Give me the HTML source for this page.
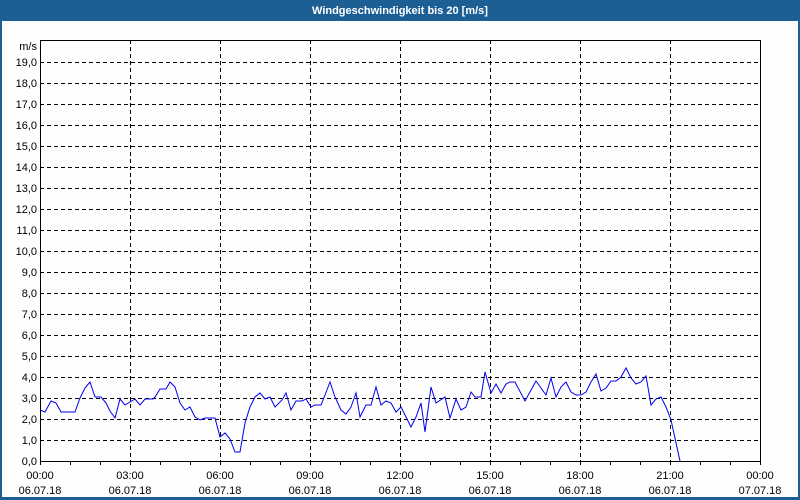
<!DOCTYPE html>
<html><head><meta charset="utf-8"><style>
html,body{margin:0;padding:0;width:800px;height:500px;overflow:hidden;background:#fff}
</style></head><body>
<svg width="800" height="500" xmlns="http://www.w3.org/2000/svg" font-family="Liberation Sans, DejaVu Sans, sans-serif" font-size="11">
<rect x="0" y="0" width="800" height="500" fill="#1c5f95"/>
<rect x="2" y="21" width="796" height="476" fill="#fdfefd"/>
<text x="400" y="14" fill="#fff" font-weight="bold" text-anchor="middle">Windgeschwindigkeit bis 20 [m/s]</text>
<g stroke="#000" stroke-width="1" stroke-dasharray="4,3" shape-rendering="crispEdges">
<path d="M40 440.5H760M40 419.5H760M40 398.5H760M40 377.5H760M40 356.5H760M40 335.5H760M40 314.5H760M40 293.5H760M40 272.5H760M40 251.5H760M40 230.5H760M40 209.5H760M40 188.5H760M40 167.5H760M40 146.5H760M40 125.5H760M40 104.5H760M40 83.5H760M40 62.5H760"/>
<path d="M130.5 40V461M220.5 40V461M310.5 40V461M400.5 40V461M490.5 40V461M580.5 40V461M670.5 40V461"/>
</g>
<g stroke="#000" stroke-width="1" fill="none" shape-rendering="crispEdges">
<rect x="40.5" y="40.5" width="720" height="421"/>
<path d="M70.5 461V465M100.5 461V465M130.5 461V465M160.5 461V465M190.5 461V465M220.5 461V465M250.5 461V465M280.5 461V465M310.5 461V465M340.5 461V465M370.5 461V465M400.5 461V465M430.5 461V465M460.5 461V465M490.5 461V465M520.5 461V465M550.5 461V465M580.5 461V465M610.5 461V465M640.5 461V465M670.5 461V465M700.5 461V465M730.5 461V465M40.5 461V465M760.5 461V465"/>
</g>
<polyline fill="none" stroke="#0000ee" stroke-width="1" points="40,410 45,412 51,401 56,403 61,412 75,412 80,398 85,388 90,382 95,397 101,397 106,403 110,411 115,418 120,399 125,405 130,402 135,399 140,405 145,399 153,399 155,397 160,389 166,389 170,382 175,387 180,403 185,410 190,407 195,417 200,420 205,418 215,418 220,437 225,433 230,439 235,452 240,452 245,423 250,407 255,397 260,393 265,399 270,397 275,407 282,400 286,393 291,410 296,401 302,401 306,399 311,407 315,405 321,405 325,395 330,382 335,397 341,410 346,414 351,407 356,393 360,417 366,405 371,405 376,387 381,405 386,401 391,403 396,412 401,407 406,417 411,427 416,417 421,403 425,432 431,387 436,403 445,397 450,418 456,399 461,410 466,407 471,392 475,397 481,397 485,372 491,393 496,384 501,393 506,384 510,382 515,382 525,401 536,381 541,388 546,395 551,378 556,397 561,387 566,382 571,392 576,395 581,395 586,392 591,382 596,374 601,391 606,388 611,381 616,381 621,377 626,368 631,378 636,384 641,382 646,376 651,405 656,399 661,397 666,407 671,420 680,461"/>
<g fill="#000" text-anchor="end">
<text x="37" y="50">m/s</text>
<text x="37" y="465">0,0</text><text x="37" y="444">1,0</text><text x="37" y="423">2,0</text><text x="37" y="402">3,0</text><text x="37" y="381">4,0</text><text x="37" y="360">5,0</text><text x="37" y="339">6,0</text><text x="37" y="318">7,0</text><text x="37" y="297">8,0</text><text x="37" y="276">9,0</text><text x="37" y="255">10,0</text><text x="37" y="234">11,0</text><text x="37" y="213">12,0</text><text x="37" y="192">13,0</text><text x="37" y="171">14,0</text><text x="37" y="150">15,0</text><text x="37" y="129">16,0</text><text x="37" y="108">17,0</text><text x="37" y="87">18,0</text><text x="37" y="66">19,0</text>
</g>
<g fill="#000" text-anchor="middle">
<text x="40" y="479">00:00</text><text x="40" y="494">06.07.18</text>
<text x="130" y="479">03:00</text><text x="130" y="494">06.07.18</text>
<text x="220" y="479">06:00</text><text x="220" y="494">06.07.18</text>
<text x="310" y="479">09:00</text><text x="310" y="494">06.07.18</text>
<text x="400" y="479">12:00</text><text x="400" y="494">06.07.18</text>
<text x="490" y="479">15:00</text><text x="490" y="494">06.07.18</text>
<text x="580" y="479">18:00</text><text x="580" y="494">06.07.18</text>
<text x="670" y="479">21:00</text><text x="670" y="494">06.07.18</text>
<text x="760" y="479">00:00</text><text x="760" y="494">07.07.18</text>
</g>
</svg>
</body></html>
